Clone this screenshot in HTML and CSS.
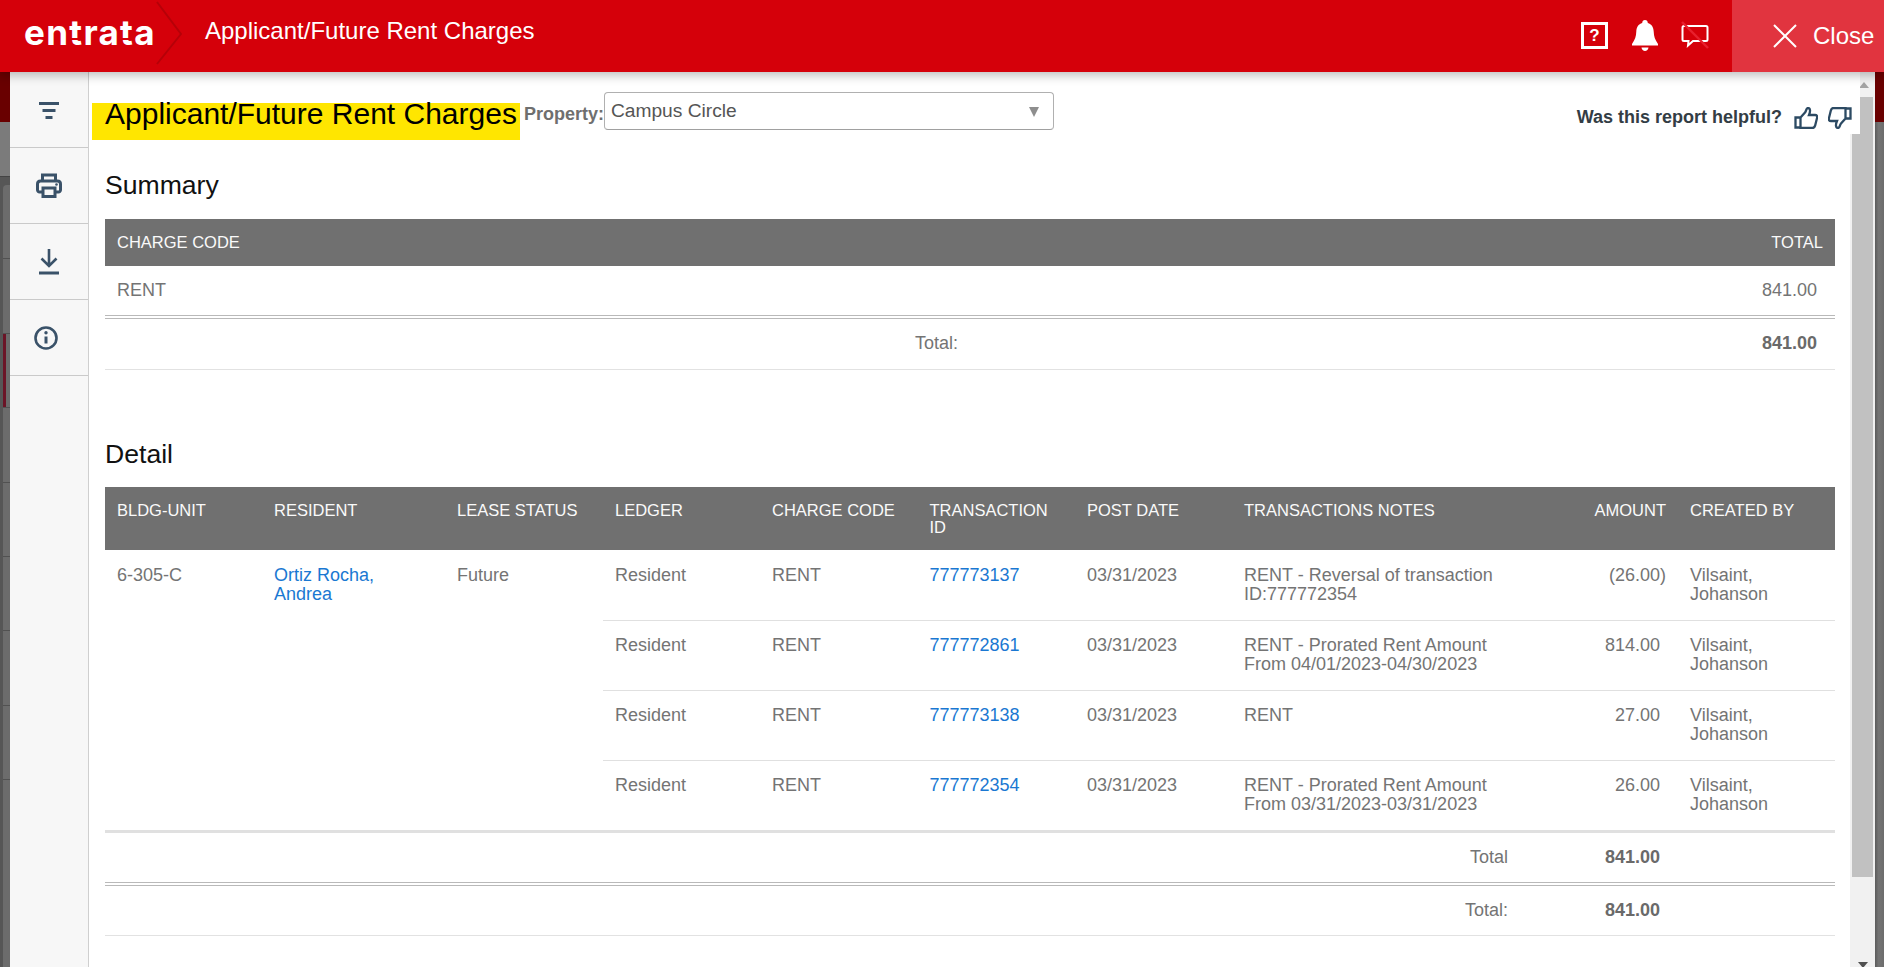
FILE: index.html
```html
<!DOCTYPE html>
<html lang="en">
<head>
<meta charset="utf-8">
<title>Applicant/Future Rent Charges</title>
<link rel="stylesheet" href="styles.css">
</head>
<body>
<header class="topbar">
  <div class="logo">en<span class="logo-t">t</span>ra<span class="logo-t">t</span>a</div>
  <svg class="chevron" width="26" height="66" viewBox="0 0 26 66"><path d="M1 2 L25 34 L1 64" fill="none" stroke="#b60008" stroke-width="2"/></svg>
  <div class="topbar-title">Applicant/Future Rent Charges</div>
  <div class="topbar-icons">
    <div class="help-box">?</div>
    <svg class="bell" width="26" height="32" viewBox="0 0 26 32"><path fill="#fff" d="M13 0c1.7 0 2.8 1.2 2.8 2.9 3.8 1.1 5.7 4.300 5.900 8.600.2 5 1.200 8 4.300 12.500v1.500H0V24c3.100-4.500 4.100-7.500 4.300-12.500.2-4.300 2.100-7.500 5.900-8.600C10.200 1.200 11.300 0 13 0z"/><path fill="#fff" d="M9.500 27.500h7c-.3 2-1.700 3.500-3.500 3.500s-3.200-1.500-3.500-3.500z"/></svg>
    <svg class="chat" width="28" height="28" viewBox="0 0 28 28"><path d="M3 5h22c1 0 1.500.5 1.500 1.500v12c0 1-.5 1.500-1.500 1.500H12l-5 4.500.5-4.500H3c-1 0-1.500-.5-1.500-1.500v-12C1.500 5.500 2 5 3 5z" fill="none" stroke="#fff" stroke-width="2"/><path d="M1 1 L27 27" stroke="#e8202e" stroke-width="2.400"/></svg>
  </div>
  <div class="close-btn">
    <svg width="24" height="24" viewBox="0 0 24 24"><path d="M1 1 L23 23 M23 1 L1 23" stroke="#fff" stroke-width="2" fill="none"/></svg>
    <span>Close</span>
  </div>
</header>

<div class="workspace">
  <div class="backdrop-left">
    <div class="bd-red"></div>
    <div class="bd-gray"></div>
    <div class="bd-nav">
      <div class="bd-item"></div>
      <div class="bd-item"></div>
      <div class="bd-item bd-active"></div>
      <div class="bd-item"></div>
      <div class="bd-item"></div>
      <div class="bd-item"></div>
      <div class="bd-item"></div>
      <div class="bd-item"></div>
    </div>
  </div>

  <nav class="sidebar">
    <div class="side-item side-item-filter">
      <svg width="20" height="18" viewBox="0 0 20 18"><path d="M0 1.500h20M3.500 8.500h13M6.500 15.500h7" stroke="#3a5269" stroke-width="3" fill="none"/></svg>
    </div>
    <div class="side-item">
      <svg width="26" height="25" viewBox="0 0 26 25"><path d="M6.500 8V2h13v6" fill="none" stroke="#3a5269" stroke-width="3"/><path d="M6 19H3.500c-1 0-2-1-2-2v-6c0-1.500 1-3 3-3h17c2 0 3 1.500 3 3v6c0 1-1 2-2 2H20" fill="none" stroke="#3a5269" stroke-width="3"/><path d="M7 15h12v8.500H7z" fill="none" stroke="#3a5269" stroke-width="3"/><circle cx="20.500" cy="11.500" r="1.300" fill="#3a5269"/></svg>
    </div>
    <div class="side-item">
      <svg width="20" height="26" viewBox="0 0 20 26"><path d="M10 0v16M2.500 9.500L10 17l7.500-7.500" fill="none" stroke="#3a5269" stroke-width="2.600"/><path d="M0 24h20" stroke="#3a5269" stroke-width="3"/></svg>
    </div>
    <div class="side-item side-item-info">
      <svg width="24" height="24" viewBox="0 0 24 24"><circle cx="12" cy="12" r="10.500" fill="none" stroke="#3a5269" stroke-width="2.600"/><path d="M12 10.500v7" stroke="#3a5269" stroke-width="3"/><circle cx="12" cy="6.800" r="1.700" fill="#3a5269"/></svg>
    </div>
  </nav>

  <main class="report">
    <div class="helpful">
      <span class="helpful-text">Was this report helpful?</span>
      <svg width="24" height="22" viewBox="0 0 24 22"><path d="M6.500 10.500h-5v10h5M6.500 10.500l4.500-5c1.500-1.700 1-4.500 3-4.500 2.500 0 2.500 3.500 1 7h6c1.800 0 2.500 1.200 2.100 2.700l-2 8c-.4 1.300-1.100 2.300-2.600 2.300H6.500z" fill="none" stroke="#2c4a63" stroke-width="2.300"/></svg>
      <svg width="24" height="22" viewBox="0 0 24 22"><path d="M17.500 11.500h5v-10h-5M17.500 11.500l-4.500 5c-1.500 1.700-1 4.500-3 4.500-2.500 0-2.500-3.500-1-7H3c-1.800 0-2.500-1.200-2.100-2.700l2-8C3.300 2 4 1 5.500 1h12z" fill="none" stroke="#2c4a63" stroke-width="2.300"/></svg>
    </div>

    <div class="report-top">
      <h1 class="report-title">Applicant/Future Rent Charges</h1>
      <label class="property-label">Property:</label>
      <div class="select"><span>Campus Circle</span><i class="select-arrow"></i></div>
    </div>

    <h2 class="section-title section-summary">Summary</h2>
    <table class="grid grid-summary">
      <thead>
        <tr><th>CHARGE CODE</th><th class="r">TOTAL</th></tr>
      </thead>
      <tbody>
        <tr class="last-row"><td>RENT</td><td class="r num">841.00</td></tr>
        <tr class="grand"><td class="r">Total:</td><td class="r num strong">841.00</td></tr>
      </tbody>
    </table>

    <h2 class="section-title section-detail">Detail</h2>
    <table class="grid grid-detail">
      <colgroup>
        <col class="c-unit"><col class="c-res"><col class="c-lease"><col class="c-ledger"><col class="c-code"><col class="c-id"><col class="c-date"><col class="c-notes"><col class="c-amt"><col class="c-by">
      </colgroup>
      <thead>
        <tr>
          <th>BLDG-UNIT</th><th>RESIDENT</th><th>LEASE STATUS</th><th>LEDGER</th><th>CHARGE CODE</th><th>TRANSACTION ID</th><th>POST DATE</th><th>TRANSACTIONS NOTES</th><th class="r">AMOUNT</th><th>CREATED BY</th>
        </tr>
      </thead>
      <tbody>
        <tr class="line line-first">
          <td rowspan="4" class="span">6-305-C</td>
          <td rowspan="4" class="span"><a>Ortiz Rocha, Andrea</a></td>
          <td rowspan="4" class="span">Future</td>
          <td>Resident</td><td>RENT</td><td><a>777773137</a></td><td>03/31/2023</td><td>RENT - Reversal of transaction ID:777772354</td><td class="r">(26.00)</td><td>Vilsaint, Johanson</td>
        </tr>
        <tr class="line">
          <td>Resident</td><td>RENT</td><td><a>777772861</a></td><td>03/31/2023</td><td>RENT - Prorated Rent Amount From 04/01/2023-04/30/2023</td><td class="r num">814.00</td><td>Vilsaint, Johanson</td>
        </tr>
        <tr class="line">
          <td>Resident</td><td>RENT</td><td><a>777773138</a></td><td>03/31/2023</td><td>RENT</td><td class="r num">27.00</td><td>Vilsaint, Johanson</td>
        </tr>
        <tr class="line line-end">
          <td>Resident</td><td>RENT</td><td><a>777772354</a></td><td>03/31/2023</td><td>RENT - Prorated Rent Amount From 03/31/2023-03/31/2023</td><td class="r num">26.00</td><td>Vilsaint, Johanson</td>
        </tr>
        <tr class="subtotal last-row">
          <td colspan="8" class="r">Total</td><td class="r num strong">841.00</td><td></td>
        </tr>
        <tr class="grand grand-detail">
          <td colspan="8" class="r">Total:</td><td class="r num strong">841.00</td><td></td>
        </tr>
      </tbody>
    </table>
  </main>

  <div class="scrollbar">
    <i class="sb-up"></i>
    <div class="sb-thumb"></div>
    <i class="sb-down"></i>
  </div>

  <div class="backdrop-right">
    <div class="bd-red"></div>
    <div class="bdr-gray"></div>
  </div>
</div>
</body>
</html>
```

FILE: styles.css
```css
* { box-sizing: border-box; }
html, body { margin: 0; height: 100%; }
body {
  width: 1884px;
  height: 967px;
  overflow: hidden;
  font-family: "Liberation Sans", Arial, sans-serif;
  background: #fff;
  display: flex;
  flex-direction: column;
}

/* top bar */
.topbar {
  flex: none;
  height: 72px;
  background: #d5000a;
  display: flex;
  align-items: center;
  color: #fff;
  position: relative;
  z-index: 5;
  box-shadow: 0 3px 10px rgba(0, 0, 0, .28);
}
.logo {
  width: 156px;
  padding-left: 24px;
  font-family: Inter, sans-serif;
  font-weight: 700;
  font-size: 35px;
  letter-spacing: 1.3px;
  line-height: 36px;
  margin-top: -9px;
  white-space: nowrap;
}
.logo-t { position: relative; display: inline-block; }
.logo-t::after {
  content: "";
  position: absolute;
  left: 1px;
  right: 0;
  bottom: 10px;
  height: 2px;
  background: #d5000a;
}
.chevron { flex: none; margin-top: -6px; }
.topbar-title {
  margin-left: 23px;
  font-size: 24px;
  line-height: 28px;
  margin-top: -11px;
  white-space: nowrap;
}
.topbar-icons {
  margin-left: auto;
  display: flex;
  align-items: center;
  height: 100%;
  padding-right: 23px;
}
.help-box {
  width: 27px;
  height: 27px;
  border: 3px solid #fff;
  font-weight: 700;
  font-size: 17px;
  line-height: 21px;
  text-align: center;
  margin-right: 24px;
  margin-bottom: 2px;
}
.bell { margin-right: 23px; margin-bottom: 1px; }
.chat { margin-bottom: 3px; }
.close-btn {
  width: 152px;
  height: 100%;
  background: #e1343f;
  display: flex;
  align-items: center;
  padding-left: 41px;
  gap: 16px;
  font-size: 24px;
  color: #fff;
}

/* workspace */
.workspace {
  flex: 1;
  min-height: 0;
  display: flex;
}
.backdrop-left {
  flex: none;
  width: 10px;
  background: #565656;
  display: flex;
  flex-direction: column;
}
.bd-red { flex: none; height: 50px; background: #690000; }
.bd-gray { flex: none; height: 55px; background: #7b7b7b; border-bottom: 1px solid #444; }
.bd-nav {
  flex: 1;
  margin: 8px 0 0 3px;
  background: #6c6c6c;
  border-top-left-radius: 4px;
}
.bd-item { height: 74.4px; border-bottom: 1px solid #515151; }
.bd-active { background: linear-gradient(90deg, #6b1426 3px, #6b6b6b 3px); }

.sidebar {
  flex: none;
  width: 79px;
  background: #f7f7f7;
  border-right: 1px solid #cfcfcf;
}
.side-item {
  height: 76px;
  border-bottom: 1px solid #cacaca;
  display: flex;
  align-items: center;
  justify-content: center;
}
.side-item svg { display: block; }
.side-item-filter { padding-top: 2px; }
.side-item-info { padding-right: 6px; }

/* report area */
.report {
  flex: 1;
  min-width: 0;
  position: relative;
  background: #fff;
  padding: 20px 15px 0 16px;
  color: #747474;
  overflow: visible;
}
.report-top {
  display: flex;
  align-items: flex-start;
  margin-left: -13px;
}
.report-title {
  margin: 11px 4px 0 0;
  padding: 0 3px 15px 13px;
  background: #ffe600;
  color: #000;
  font-size: 30px;
  font-weight: 400;
  line-height: 22px;
  white-space: nowrap;
}
.property-label {
  margin-top: 13px;
  font-size: 18px;
  line-height: 18px;
  font-weight: 700;
  color: #6f6f6f;
  width: 80px;
  flex: none;
}
.select {
  width: 450px;
  height: 38px;
  border: 1px solid #b0b0b0;
  border-bottom-color: #a0a0a0;
  border-radius: 4px;
  display: flex;
  align-items: center;
  justify-content: space-between;
  padding: 0 14px 0 6px;
  font-size: 19.2px;
  color: #555;
}
.select-arrow {
  width: 0;
  height: 0;
  border-left: 5px solid transparent;
  border-right: 5px solid transparent;
  border-top: 10px solid #8e8e8e;
  margin-top: 1px;
}
.helpful {
  position: absolute;
  top: 0;
  right: -10px;
  width: 300px;
  height: 62px;
  background: #fff;
  display: flex;
  align-items: center;
  justify-content: flex-end;
  padding: 29px 8px 0 0;
  z-index: 2;
}
.helpful-text {
  font-size: 18px;
  font-weight: 700;
  color: #333d45;
  margin-right: 12px;
  white-space: nowrap;
}
.helpful svg { flex: none; }
.helpful svg + svg { margin-left: 10px; }

.section-title {
  margin: 0;
  font-size: 26.6px;
  font-weight: 400;
  line-height: 30px;
  color: #111;
}
.section-summary { margin-top: 30px; margin-bottom: 19px; }
.section-detail { margin-top: 69px; margin-bottom: 18px; }

.grid {
  width: 100%;
  table-layout: fixed;
  border-collapse: separate;
  border-spacing: 0;
  font-size: 18px;
  line-height: 19px;
}
.grid th {
  background: #707070;
  color: #fafafa;
  font-weight: 400;
  font-size: 16.5px;
  line-height: 17px;
  text-align: left;
  vertical-align: top;
  padding: 15px 12px 15px;
}
.grid-detail th { padding-bottom: 14px; }
.grid td {
  padding: 15px 12px 16px;
  vertical-align: top;
}
.grid .r { text-align: right; }
.grid .num { padding-right: 18px; }
.grid .strong { font-weight: 700; color: #6a6a6a; }
.grid a { color: #1a78d2; }

.grid tr.last-row td { border-bottom: 4px double #b9b9b9; padding-top: 15px; padding-bottom: 15px; }
.grid tr.grand td { border-bottom: 1px solid #e2e2e2; padding-top: 15px; padding-bottom: 16px; }
.grid tr.grand-detail td { padding-top: 15px; padding-bottom: 15px; }

.grid tr.line-first td { padding-top: 16px; }
.grid tr.line td { border-bottom: 1px solid #e0e0e0; }
.grid tr.line td.span { border-bottom: 0; }
.grid tr.line-end td { border-bottom: 0; }
.grid tr.subtotal td { border-top: 3px solid #e0e0e0; }

.c-unit { width: 157px; }
.c-res { width: 183px; }
.c-lease { width: 158px; }
.c-ledger { width: 157px; }
.c-code { width: 157.5px; }
.c-id { width: 157.5px; }
.c-date { width: 157px; }
.c-notes { width: 288px; }
.c-amt { width: 158px; }
.c-by { width: 157px; }

/* scrollbar */
.scrollbar {
  flex: none;
  width: 25px;
  background: #f1f1f1;
  position: relative;
  overflow: hidden;
}
.sb-thumb {
  margin: 25px 2px 0;
  height: 780px;
  background: #c1c1c1;
}
.sb-up, .sb-down {
  position: absolute;
  left: 8px;
  width: 0;
  height: 0;
  border-left: 5px solid transparent;
  border-right: 5px solid transparent;
}
.sb-up { top: 10px; border-bottom: 6px solid #a3a3a3; left: 9px; }
.sb-down { top: 890px; border-top: 6px solid #505050; }

.backdrop-right {
  flex: none;
  width: 9px;
  display: flex;
  flex-direction: column;
  background: #707070;
}
.bdr-gray { flex: 1; background: linear-gradient(90deg, #5c5c5c, #757575 40%, #6c6c6c); }
```
